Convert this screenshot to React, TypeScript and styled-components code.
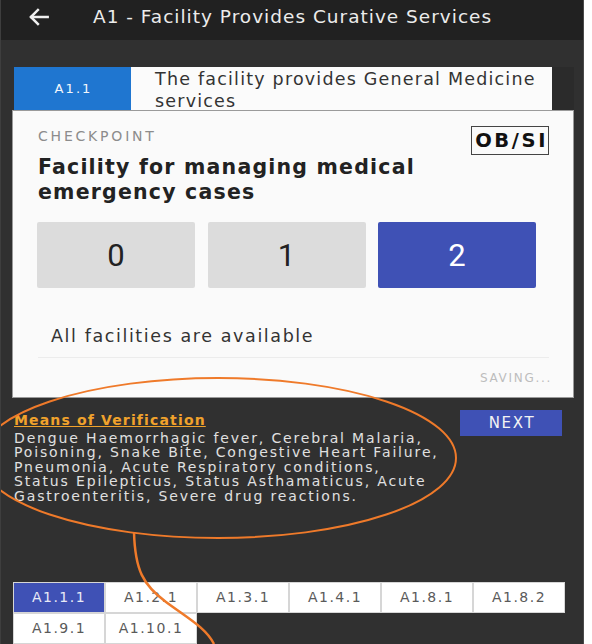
import React from "react";
import styled, { createGlobalStyle } from "styled-components";

const GlobalStyle = createGlobalStyle`
  html, body { margin: 0; padding: 0; background: #ffffff; }
  body { font-family: "DejaVu Sans", "Noto Sans", "Liberation Sans", sans-serif; }
  * { box-sizing: border-box; }
`;

const Screen = styled.div`
  position: relative;
  width: 584px;
  height: 644px;
  background: #303030;
  border-left: 1px solid #3e3e3e;
  border-right: 1px solid #4a4a4a;
  overflow: hidden;
  display: flex;
  flex-direction: column;
`;

const TopBar = styled.div`
  height: 40px;
  flex: none;
  background: #212121;
  display: flex;
  align-items: center;
  padding-left: 25px;
  color: #ececec;
`;

const BackButton = styled.span`
  display: flex;
  width: 26px;
  height: 26px;
  margin-top: -6px;
`;

const Title = styled.div`
  margin-left: 41px;
  margin-top: -8px;
  font-size: 18.5px;
  letter-spacing: 1px;
  white-space: nowrap;
`;

const Body = styled.div`
  padding: 27px 10px 0 11px;
  display: flex;
  flex-direction: column;
`;

const StandardRow = styled.div`
  display: flex;
  height: 43px;
  margin-left: 2px;
  width: 560px;
  background: #2b2b2b;
`;

const CodeCell = styled.div`
  width: 117px;
  background: #1f76d0;
  color: #f2f6fb;
  font-size: 13px;
  letter-spacing: 2.1px;
  display: flex;
  align-items: center;
  justify-content: center;
  padding-left: 2px;
`;

const DescCell = styled.div`
  width: 421px;
  background: #fbfbfb;
  color: #333;
  font-size: 17.5px;
  letter-spacing: 1.2px;
  line-height: 22px;
  padding: 1px 0 0 24px;
`;

const Card = styled.div`
  width: 562px;
  height: 288px;
  background: #fafafa;
  border: 1px solid #9a9a9a;
  padding: 14px 24px 0 25px;
  display: flex;
  flex-direction: column;
`;

const CardHead = styled.div`
  display: flex;
  justify-content: space-between;
  align-items: flex-start;
`;

const Eyebrow = styled.div`
  font-size: 14px;
  letter-spacing: 2.8px;
  color: #8c8c8c;
  margin-top: 3px;
`;

const Tag = styled.div`
  border: 1px solid #444;
  padding: 3px 0 3px 3px;
  font-size: 19.5px;
  font-weight: 700;
  letter-spacing: 2.6px;
  color: #111;
  line-height: 21px;
  margin-top: 1px;
`;

const Question = styled.div`
  font-size: 20.5px;
  font-weight: 700;
  letter-spacing: 1.2px;
  color: #222;
  line-height: 25px;
`;

const Scores = styled.div`
  display: grid;
  grid-template-columns: repeat(3, 158px);
  column-gap: 12.5px;
  margin-top: 17px;
  margin-left: -1px;
`;

const ScoreButton = styled.div<{ $active?: boolean }>`
  height: 66px;
  border-radius: 2px;
  background: ${(p) => (p.$active ? "#3f51b5" : "#dcdcdc")};
  color: ${(p) => (p.$active ? "#ffffff" : "#222222")};
  font-size: 31px;
  font-family: Roboto, "DejaVu Sans", sans-serif;
  display: flex;
  align-items: center;
  justify-content: center;
`;

const Answer = styled.div`
  font-size: 17.5px;
  letter-spacing: 1.6px;
  color: #333;
  margin: 38px 0 0 13px;
`;

const Divider = styled.div`
  height: 1px;
  background: #ececec;
  margin-top: 11px;
`;

const Saving = styled.div`
  align-self: flex-end;
  font-size: 12px;
  letter-spacing: 1.7px;
  color: #bdbdbd;
  margin-top: 13px;
  margin-right: -3px;
`;

const VerifyRow = styled.div`
  display: flex;
  justify-content: space-between;
  margin-top: 12px;
  padding-left: 2px;
`;

const VerifyText = styled.div`
  width: 446px;
  padding-top: 3px;
  color: #e0e0e0;
  font-size: 14px;
  letter-spacing: 1.85px;
  line-height: 14.6px;
  white-space: nowrap;
`;

const VerifyTitle = styled.div`
  color: #f0a22c;
  font-weight: 700;
  font-size: 14px;
  letter-spacing: 1.15px;
  text-decoration: underline;
  margin-bottom: 3px;
`;

const NextButton = styled.div`
  width: 102px;
  height: 26px;
  background: #3f51b5;
  color: #f3f3f3;
  font-size: 15px;
  letter-spacing: 1.7px;
  display: flex;
  align-items: center;
  justify-content: center;
  padding-left: 2px;
  margin-right: 11px;
`;

const Tabs = styled.div`
  display: grid;
  grid-template-columns: repeat(6, 92px);
  grid-auto-rows: 31px;
  margin-top: 78px;
  margin-left: 1px;
`;

const Tab = styled.div<{ $active?: boolean }>`
  background: ${(p) => (p.$active ? "#3f51b5" : "#ffffff")};
  color: ${(p) => (p.$active ? "#e8eaf6" : "#5a5a5a")};
  border: 1px solid #d6d6d6;
  font-size: 14px;
  letter-spacing: 1.5px;
  display: flex;
  align-items: center;
  justify-content: center;
`;

const Annotation = styled.svg`
  position: absolute;
  left: 0;
  top: 0;
  pointer-events: none;
`;

const tabs = ["A1.1.1", "A1.2.1", "A1.3.1", "A1.4.1", "A1.8.1", "A1.8.2", "A1.9.1", "A1.10.1"];

export default function App() {
  return (
    <>
      <GlobalStyle />
      <Screen>
        <TopBar>
          <BackButton>
            <svg width="26" height="26" viewBox="0 0 24 24" fill="none" stroke="#f0f0f0" strokeWidth="2.3" strokeLinecap="square">
              <path d="M20 12H5" />
              <path d="M11 5.5L4.5 12L11 18.5" />
            </svg>
          </BackButton>
          <Title>A1 - Facility Provides Curative Services</Title>
        </TopBar>
        <Body>
          <StandardRow>
            <CodeCell>A1.1</CodeCell>
            <DescCell>The facility provides General Medicine services</DescCell>
          </StandardRow>
          <Card>
            <CardHead>
              <Eyebrow>CHECKPOINT</Eyebrow>
              <Tag>OB/SI</Tag>
            </CardHead>
            <Question>
              Facility for managing medical
              <br />
              emergency cases
            </Question>
            <Scores>
              <ScoreButton>0</ScoreButton>
              <ScoreButton>1</ScoreButton>
              <ScoreButton $active>2</ScoreButton>
            </Scores>
            <Answer>All facilities are available</Answer>
            <Divider />
            <Saving>SAVING...</Saving>
          </Card>
          <VerifyRow>
            <VerifyText>
              <VerifyTitle>Means of Verification</VerifyTitle>
              Dengue Haemorrhagic fever, Cerebral Malaria,
              <br />
              Poisoning, Snake Bite, Congestive Heart Failure,
              <br />
              Pneumonia, Acute Respiratory conditions,
              <br />
              Status Epilepticus, Status Asthamaticus, Acute
              <br />
              Gastroenteritis, Severe drug reactions.
            </VerifyText>
            <NextButton>NEXT</NextButton>
          </VerifyRow>
          <Tabs>
            {tabs.map((t, i) => (
              <Tab key={t} $active={i === 0}>
                {t}
              </Tab>
            ))}
          </Tabs>
        </Body>
        <Annotation width="584" height="644" viewBox="0 0 584 644">
          <ellipse cx="217" cy="458" rx="238" ry="80" fill="none" stroke="#ef7a2a" strokeWidth="2" />
          <path d="M133 532 C 134 570, 142 585, 165 602 S 205 628, 213 644" fill="none" stroke="#ef7a2a" strokeWidth="2.5" />
        </Annotation>
      </Screen>
    </>
  );
}
